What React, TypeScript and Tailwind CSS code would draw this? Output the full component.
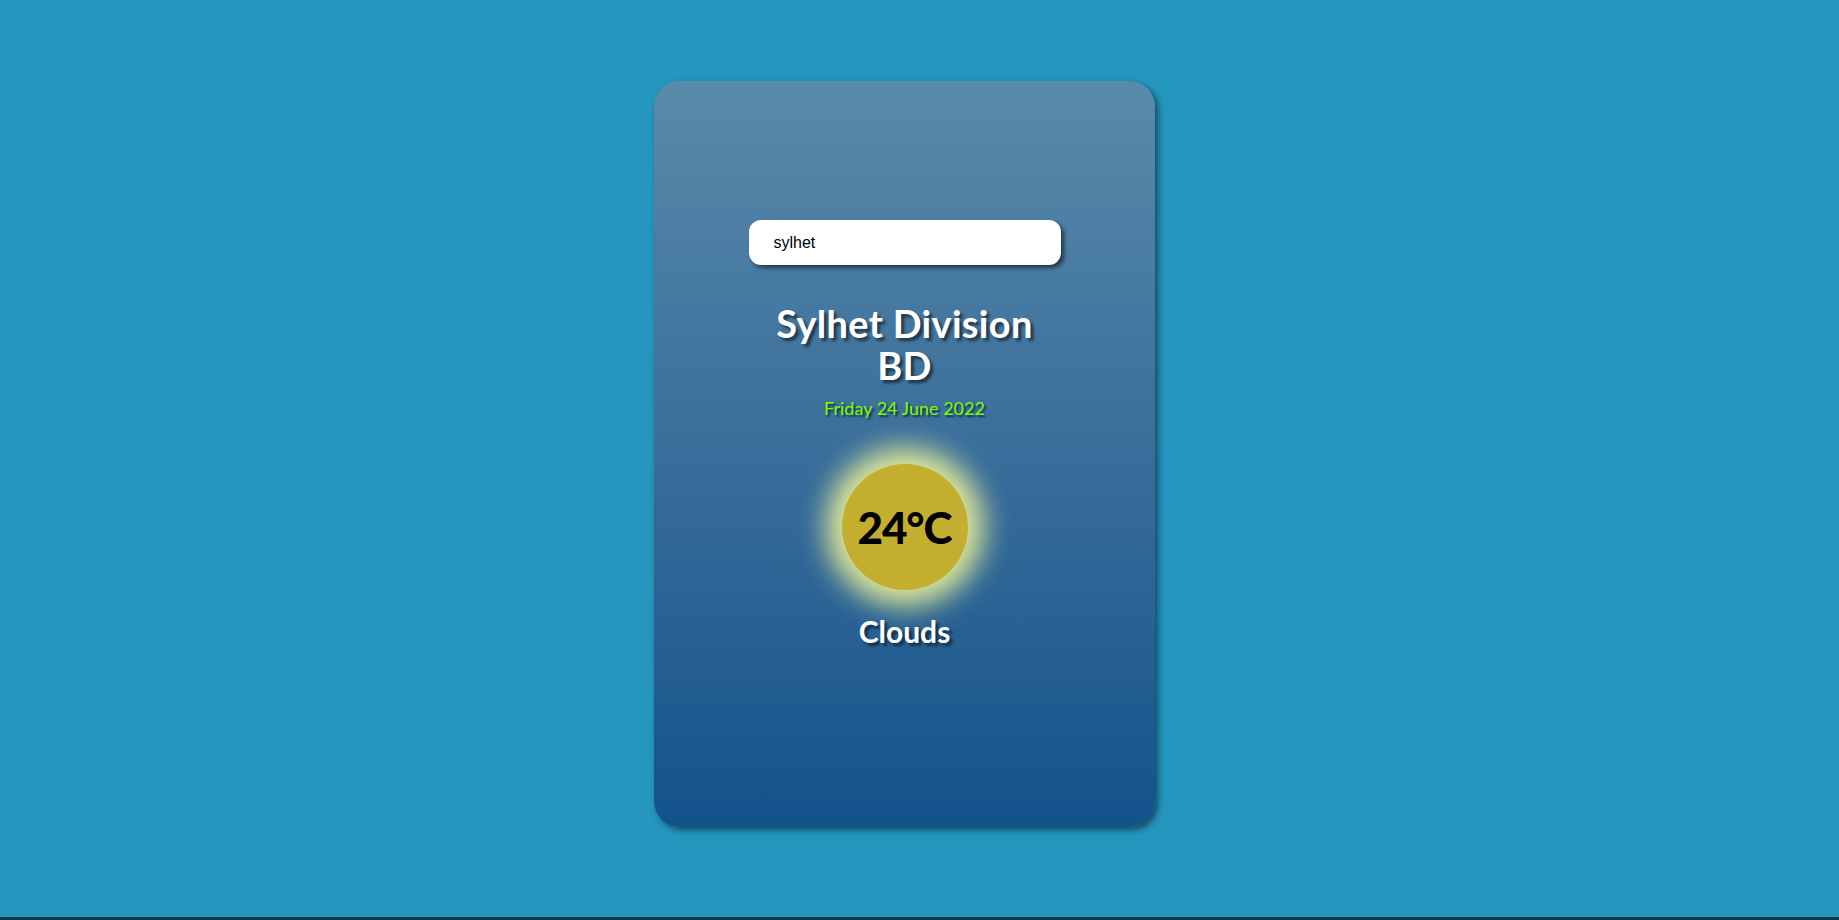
const gill = "font-['Lato','Open_Sans',sans-serif]"

function SearchBox() {
  return (
    <div className="h-[45px] w-[312px] rounded-[12px] bg-white pl-[25px] shadow-[3px_3px_4px_rgba(0,0,0,0.55)] flex items-center">
      <input
        defaultValue="sylhet"
        className="w-full bg-transparent text-[16px] text-black outline-none font-['Liberation_Sans',Arial,sans-serif]"
      />
    </div>
  )
}

function TempBadge() {
  return (
    <div className="flex h-[126px] w-[126px] items-center justify-center rounded-full bg-[#c4ae2f] shadow-[0_0_28px_16px_rgba(255,255,150,0.85)]">
      <span className={`${gill} text-[44px] font-black tracking-tight text-black`}>24°C</span>
    </div>
  )
}

export default function App() {
  return (
    <div className="flex h-[920px] w-full flex-col bg-[#2596be]">
      <div className="flex flex-1 pl-[654px] pt-[81px]">
        <div className="flex h-[746px] w-[501px] flex-col items-center rounded-[26px] bg-gradient-to-b from-[#5a8aaa] to-[#12528b] pt-[139px] shadow-[3px_3px_6px_rgba(0,0,0,0.5)]">
          <SearchBox />
          <div className={`${gill} mt-[37px] text-center text-[38px] font-bold leading-[42px] tracking-[0.3px] text-white [text-shadow:3px_3px_3px_rgba(0,0,0,0.55)]`}>
            <div>Sylhet Division</div>
            <div>BD</div>
          </div>
          <div className={`${gill} mt-[9px] text-[18px] text-[#7cfc00] [text-shadow:2px_2px_2px_rgba(0,0,0,0.6)]`}>
            Friday 24 June 2022
          </div>
          <div className="mt-[42px]">
            <TempBadge />
          </div>
          <div className={`${gill} mt-[19px] text-[30px] font-bold text-white [text-shadow:3px_3px_3px_rgba(0,0,0,0.55)]`}>
            Clouds
          </div>
        </div>
      </div>
      <div className="h-[3px] bg-[#0b3848]" />
    </div>
  )
}
